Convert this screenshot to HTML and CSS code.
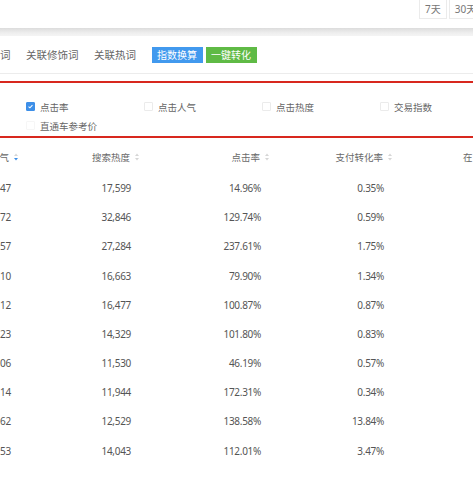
FILE: index.html
```html
<!DOCTYPE html>
<html lang="zh-CN">
<head>
<meta charset="utf-8">
<title>关键词分析</title>
<link rel="stylesheet" href="styles.css">
</head>
<body>
<div class="page">
  <div class="topbar">
    <span class="range-btn">7天</span>
    <span class="range-btn">30天</span>
  </div>
  <div class="band"></div>
  <div class="tabs">
    <span class="tab">词</span>
    <span class="tab">关联修饰词</span>
    <span class="tab">关联热词</span>
    <span class="btn btn-blue">指数换算</span>
    <span class="btn btn-green">一键转化</span>
  </div>
  <div class="filter">
    <div class="opt"><i class="cb on"><svg viewBox="0 0 9 9" width="9" height="9"><path d="M2 4.6 L3.8 6.3 L7 2.8" fill="none" stroke="#fff" stroke-width="1.3"/></svg></i>点击率</div>
    <div class="opt"><i class="cb"></i>点击人气</div>
    <div class="opt"><i class="cb"></i>点击热度</div>
    <div class="opt"><i class="cb"></i>交易指数</div>
    <div class="opt"><i class="cb faint"></i>直通车参考价</div>
  </div>
  <div class="table">
    <div class="row head">
      <div class="cell">气<svg class="sort" viewBox="0 0 4 8" width="4" height="8"><path d="M0 3 L2 0.5 L4 3 Z" fill="#d6d6d6"/><path d="M0 5 L2 7.5 L4 5 Z" fill="#3d8fe8"/></svg></div>
      <div class="cell">搜索热度<svg class="sort" viewBox="0 0 4 8" width="4" height="8"><path d="M0 3 L2 0.5 L4 3 Z" fill="#d6d6d6"/><path d="M0 5 L2 7.5 L4 5 Z" fill="#d6d6d6"/></svg></div>
      <div class="cell">点击率<svg class="sort" viewBox="0 0 4 8" width="4" height="8"><path d="M0 3 L2 0.5 L4 3 Z" fill="#d6d6d6"/><path d="M0 5 L2 7.5 L4 5 Z" fill="#d6d6d6"/></svg></div>
      <div class="cell">支付转化率<svg class="sort" viewBox="0 0 4 8" width="4" height="8"><path d="M0 3 L2 0.5 L4 3 Z" fill="#d6d6d6"/><path d="M0 5 L2 7.5 L4 5 Z" fill="#d6d6d6"/></svg></div>
      <div class="cell cut">在</div>
    </div>
    <div class="row"><div class="cell">47</div><div class="cell">17,599</div><div class="cell">14.96%</div><div class="cell">0.35%</div><div class="cell"></div></div>
    <div class="row"><div class="cell">72</div><div class="cell">32,846</div><div class="cell">129.74%</div><div class="cell">0.59%</div><div class="cell"></div></div>
    <div class="row"><div class="cell">57</div><div class="cell">27,284</div><div class="cell">237.61%</div><div class="cell">1.75%</div><div class="cell"></div></div>
    <div class="row"><div class="cell">10</div><div class="cell">16,663</div><div class="cell">79.90%</div><div class="cell">1.34%</div><div class="cell"></div></div>
    <div class="row"><div class="cell">12</div><div class="cell">16,477</div><div class="cell">100.87%</div><div class="cell">0.87%</div><div class="cell"></div></div>
    <div class="row"><div class="cell">23</div><div class="cell">14,329</div><div class="cell">101.80%</div><div class="cell">0.83%</div><div class="cell"></div></div>
    <div class="row"><div class="cell">06</div><div class="cell">11,530</div><div class="cell">46.19%</div><div class="cell">0.57%</div><div class="cell"></div></div>
    <div class="row"><div class="cell">14</div><div class="cell">11,944</div><div class="cell">172.31%</div><div class="cell">0.34%</div><div class="cell"></div></div>
    <div class="row"><div class="cell">62</div><div class="cell">12,529</div><div class="cell">138.58%</div><div class="cell">13.84%</div><div class="cell"></div></div>
    <div class="row"><div class="cell">53</div><div class="cell">14,043</div><div class="cell">112.01%</div><div class="cell">3.47%</div><div class="cell"></div></div>
  </div>
</div>
</body>
</html>
```
FILE: styles.css
```css
html, body {
  margin: 0;
  padding: 0;
  background: #fff;
}
body {
  width: 473px;
  height: 477px;
  overflow: hidden;
  font-family: "Noto Sans", "Noto Sans CJK SC", sans-serif;
  color: #666;
}
.page {
  width: 560px;
}
.topbar {
  height: 28px;
  display: flex;
  align-items: flex-start;
  gap: 2px;
  padding-left: 419px;
  box-sizing: border-box;
}
.range-btn {
  height: 19px;
  line-height: 19px;
  padding: 0 5px;
  border: 1px solid #ebebeb;
  border-top: none;
  font-size: 10px;
  color: #777;
  box-sizing: border-box;
}
.band {
  height: 8px;
  background: linear-gradient(#dcdcdc, #eeeeee 60%, #f4f4f4);
}
.tabs {
  height: 38px;
  display: flex;
  align-items: center;
  border-bottom: 1px solid #ececec;
  box-sizing: border-box;
  font-size: 10.5px;
  color: #666;
}
.tab {
  margin-right: 15.5px;
}
.btn {
  height: 16px;
  line-height: 16px;
  padding: 0 5.5px;
  font-size: 10px;
  color: #fff;
}
.btn-blue {
  background: #4199ee;
  margin-right: 3px;
}
.btn-green {
  background: #5fba45;
}
.filter {
  margin-top: 7px;
  border-top: 2px solid #d8281e;
  border-bottom: 2px solid #d8281e;
  padding: 14px 0 1px 26px;
  display: grid;
  grid-template-columns: repeat(4, 118px);
  grid-auto-rows: 19px;
  font-size: 9.5px;
  color: #666;
}
.opt {
  display: flex;
  align-items: center;
}
.cb {
  width: 9px;
  height: 9px;
  box-sizing: border-box;
  border: 1px solid #ebebeb;
  border-radius: 1px;
  margin-right: 5px;
  display: flex;
  align-items: center;
  justify-content: center;
}
.cb.on {
  background: #3d8fe8;
  border-color: #3d8fe8;
}
.cb.on svg {
  display: block;
}
.cb.faint {
  border-color: #f6f6f6;
}
.table {
  margin-top: 3px;
}
.row {
  display: grid;
  grid-template-columns: 24px 121px 130px 123px 160px;
  height: 29.2px;
  align-items: center;
  font-size: 10px;
  letter-spacing: -0.3px;
  color: #555;
}
.row.head {
  height: 32.4px;
  font-size: 9.5px;
  letter-spacing: 0;
  color: #6a6a6a;
}
.cell {
  text-align: right;
  padding-right: 14px;
  white-space: nowrap;
}
.head .cell {
  padding-right: 6px;
  display: flex;
  align-items: center;
  justify-content: flex-end;
}
.sort {
  margin-left: 5px;
  flex: none;
}
.head .cell.cut {
  justify-content: flex-start;
  padding-left: 65px;
}
```
